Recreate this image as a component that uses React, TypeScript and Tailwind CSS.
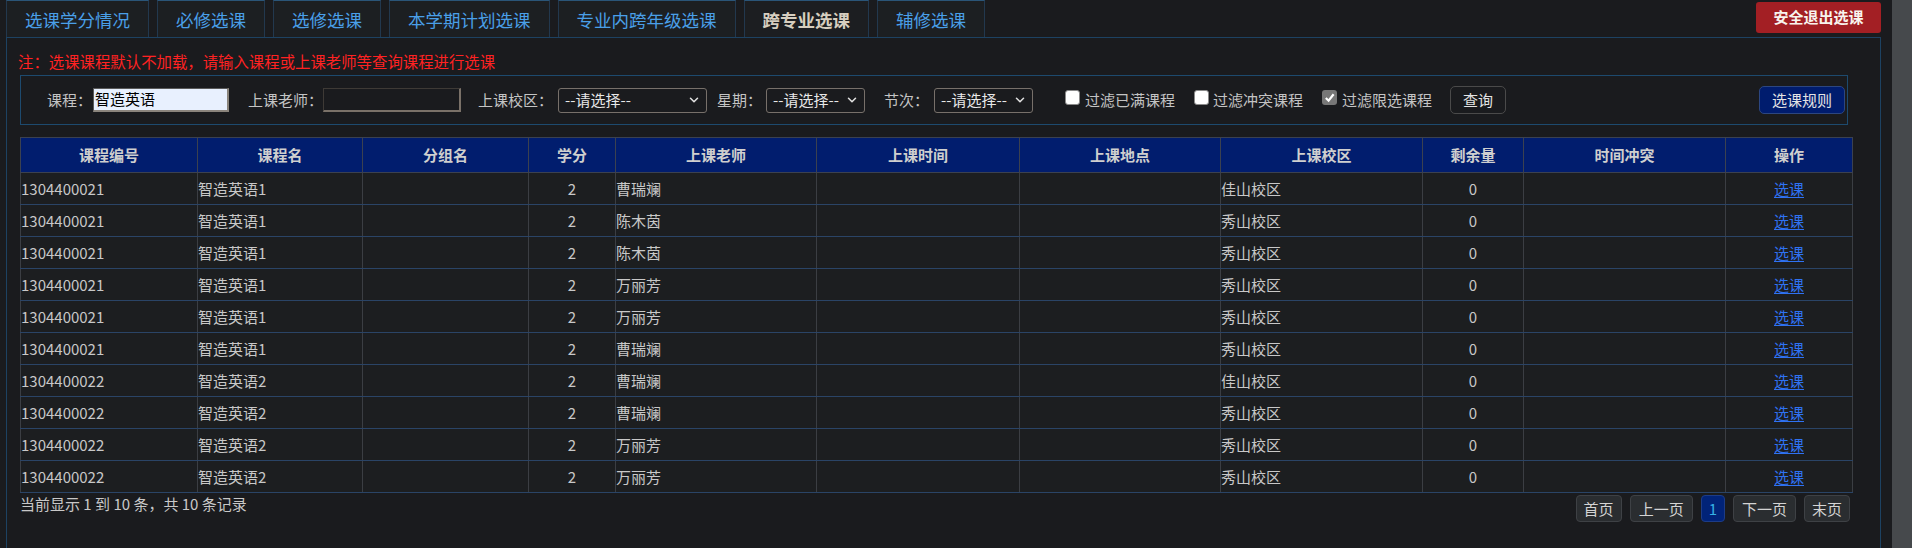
import React from 'react';
import { ChevronDown } from 'lucide-react';

const tabs = ['选课学分情况', '必修选课', '选修选课', '本学期计划选课', '专业内跨年级选课', '跨专业选课', '辅修选课'];

const rows = [
  ['1304400021', '智造英语1', '曹瑞斓', '佳山校区'],
  ['1304400021', '智造英语1', '陈木茵', '秀山校区'],
  ['1304400021', '智造英语1', '陈木茵', '秀山校区'],
  ['1304400021', '智造英语1', '万丽芳', '秀山校区'],
  ['1304400021', '智造英语1', '万丽芳', '秀山校区'],
  ['1304400021', '智造英语1', '曹瑞斓', '秀山校区'],
  ['1304400022', '智造英语2', '曹瑞斓', '佳山校区'],
  ['1304400022', '智造英语2', '曹瑞斓', '秀山校区'],
  ['1304400022', '智造英语2', '万丽芳', '秀山校区'],
  ['1304400022', '智造英语2', '万丽芳', '秀山校区'],
];

const headers = ['课程编号', '课程名', '分组名', '学分', '上课老师', '上课时间', '上课地点', '上课校区', '剩余量', '时间冲突', '操作'];
const widths = [177, 165, 166, 87, 201, 203, 201, 202, 101, 202, 127];

function Select({ w }: { w: string }) {
  return (
    <div className={`${w} h-[25px] flex items-center justify-between pl-[6px] pr-[5px] border border-[#77706a] rounded-[3px] text-[#e8e8e8] text-[15px] leading-[20px]`}>
      <span>--请选择--</span>
      <ChevronDown size={14} strokeWidth={2.6} className="text-[#e0e0e0]" />
    </div>
  );
}

function Check({ checked }: { checked?: boolean }) {
  return checked ? (
    <div className="w-[15px] h-[15px] mb-[6px] rounded-[3px] bg-[#777777] flex items-center justify-center">
      <svg width="11" height="11" viewBox="0 0 12 12">
        <path d="M2 6.5 L5 9.5 L10.5 2.5" stroke="#ffffff" strokeWidth="2.4" fill="none" />
      </svg>
    </div>
  ) : (
    <div className="w-[15px] h-[15px] mb-[6px] rounded-[3px] bg-white border border-[#8a8a8a]" />
  );
}

export default function App() {
  return (
    <div className="w-[1912px] h-[548px] flex overflow-hidden bg-[#1a1b1e] font-['Noto_Sans_CJK_SC','Noto_Sans',sans-serif]">
      <div className="flex-1 flex flex-col min-w-0 h-[548px] overflow-hidden">
        {/* top bar */}
        <div className="h-[37px] shrink-0 flex items-start justify-between pl-[6px] pr-[11px]">
          <div className="flex gap-[8px]">
            {tabs.map((t, i) =>
              i === 5 ? (
                <div key={t} className="h-[37px] px-[18px] border border-b-0 border-[#22384e] border-t-[#2a5578] bg-[#1c1e21] text-[#d6cebf] font-bold text-[17.5px] leading-[37px]">
                  {t}
                </div>
              ) : (
                <div key={t} className="h-[37px] px-[18px] border border-b-0 border-[#22384e] border-t-[#2a5578] bg-[#1c1f22] text-[#4a9fe8] text-[17.5px] leading-[37px]">
                  {t}
                </div>
              )
            )}
          </div>
          <div className="mt-[2px] w-[125px] h-[31px] rounded-[3px] bg-[#a31f24] text-[#f8f4ee] font-bold text-[15px] flex items-center justify-center">
            安全退出选课
          </div>
        </div>

        {/* panel */}
        <div className="ml-[6px] mr-[11px] h-[560px] shrink-0 border border-[#1d4262] pl-[13px]">
          <div className="mt-[13px] -ml-[2px] text-[15.4px] leading-[20px] text-[#ff2222]">
            注：选课课程默认不加载，请输入课程或上课老师等查询课程进行选课
          </div>

          {/* filter box */}
          <div className="mt-[4px] w-[1828px] h-[50px] border border-[#1d4a6e] flex items-center pl-[26px] text-[15px] leading-[20px] text-[#c4c4c4]">
            <span>课程：</span>
            <div className="ml-[1px] w-[136px] h-[24px] bg-[#e8f0fe] border-t border-l border-t-[#5a5a5a] border-l-[#5a5a5a] border-r-2 border-b-2 border-r-[#8a847c] border-b-[#8a847c] text-black text-[15px] leading-[20px] pl-[1px]">
              智造英语
            </div>
            <span className="ml-[19px]">上课老师：</span>
            <div className="w-[138px] h-[24px] border-t border-l border-t-[#3e3a36] border-l-[#3e3a36] border-r-2 border-b-2 border-r-[#7a7168] border-b-[#7a7168]" />
            <span className="ml-[17px]">上课校区：</span>
            <div className="ml-[5px]">
              <Select w="w-[149px]" />
            </div>
            <span className="ml-[10px]">星期：</span>
            <div className="ml-[4px]">
              <Select w="w-[99px]" />
            </div>
            <span className="ml-[19px]">节次：</span>
            <div className="ml-[5px]">
              <Select w="w-[99px]" />
            </div>
            <div className="ml-[32px]">
              <Check />
            </div>
            <span className="ml-[5px]">过滤已满课程</span>
            <div className="ml-[19px]">
              <Check />
            </div>
            <span className="ml-[4px]">过滤冲突课程</span>
            <div className="ml-[19px]">
              <Check checked />
            </div>
            <span className="ml-[5px]">过滤限选课程</span>
            <div className="ml-[18px] w-[56px] h-[28px] border border-[#4a4a4a] rounded-[5px] flex items-center justify-center text-[#e4e4e4]">
              查询
            </div>
            <div className="ml-auto mr-[2px] w-[86px] h-[28px] border border-[#2c4680] bg-[#001c6e] rounded-[5px] flex items-center justify-center text-[#e4e4e4]">
              选课规则
            </div>
          </div>

          {/* table */}
          <table className="mt-[12px] w-[1833px] table-fixed border-collapse text-[15px] leading-[20px] text-[#c8c8c8]">
            <colgroup>
              {widths.map((w, i) => (
                <col key={i} style={{ width: w }} />
              ))}
            </colgroup>
            <thead>
              <tr className="h-[35px] bg-[#011d6e]">
                {headers.map((h) => (
                  <th key={h} className="border border-[#3b4150] font-bold text-center text-[#cfcfcf] p-0">
                    {h}
                  </th>
                ))}
              </tr>
            </thead>
            <tbody>
              {rows.map((r, i) => (
                <tr key={i} className="h-[32px] bg-[#1c1e20]">
                  <td className="border-x border-x-[#3b3e43] border-y border-y-[#2a4466] p-0 text-left">{r[0]}</td>
                  <td className="border-x border-x-[#3b3e43] border-y border-y-[#2a4466] p-0 text-left">{r[1]}</td>
                  <td className="border-x border-x-[#3b3e43] border-y border-y-[#2a4466] p-0"></td>
                  <td className="border-x border-x-[#3b3e43] border-y border-y-[#2a4466] p-0 text-center">2</td>
                  <td className="border-x border-x-[#3b3e43] border-y border-y-[#2a4466] p-0 text-left">{r[2]}</td>
                  <td className="border-x border-x-[#3b3e43] border-y border-y-[#2a4466] p-0"></td>
                  <td className="border-x border-x-[#3b3e43] border-y border-y-[#2a4466] p-0"></td>
                  <td className="border-x border-x-[#3b3e43] border-y border-y-[#2a4466] p-0 text-left">{r[3]}</td>
                  <td className="border-x border-x-[#3b3e43] border-y border-y-[#2a4466] p-0 text-center">0</td>
                  <td className="border-x border-x-[#3b3e43] border-y border-y-[#2a4466] p-0"></td>
                  <td className="border-x border-x-[#3b3e43] border-y border-y-[#2a4466] p-0 text-center">
                    <span className="text-[#2f72f2] underline underline-offset-[2px]">选课</span>
                  </td>
                </tr>
              ))}
            </tbody>
          </table>

          {/* footer */}
          <div className="w-[1833px] flex items-start justify-between text-[15px] leading-[20px] text-[#c8c8c8]">
            <span className="mt-[1px]">当前显示 1 到 10 条，共 10 条记录</span>
            <div className="mt-[2px] mr-[3px] flex gap-[8px]">
              <div className="h-[27px] px-[7px] flex items-center rounded-[4px] bg-[#2a2d30] border border-[#3e4145] text-[#d4d4d4]">首页</div>
              <div className="h-[27px] px-[8px] flex items-center rounded-[4px] bg-[#2a2d30] border border-[#3e4145] text-[#d4d4d4]">上一页</div>
              <div className="h-[27px] px-[7px] flex items-center rounded-[4px] bg-[#012378] border border-[#1d3c86] text-[#35b2e6]">1</div>
              <div className="h-[27px] px-[8px] flex items-center rounded-[4px] bg-[#2a2d30] border border-[#3e4145] text-[#d4d4d4]">下一页</div>
              <div className="h-[27px] px-[7px] flex items-center rounded-[4px] bg-[#2a2d30] border border-[#3e4145] text-[#d4d4d4]">末页</div>
            </div>
          </div>
        </div>
      </div>
      <div className="w-[20px] h-[548px] bg-[#46494c]" />
    </div>
  );
}
